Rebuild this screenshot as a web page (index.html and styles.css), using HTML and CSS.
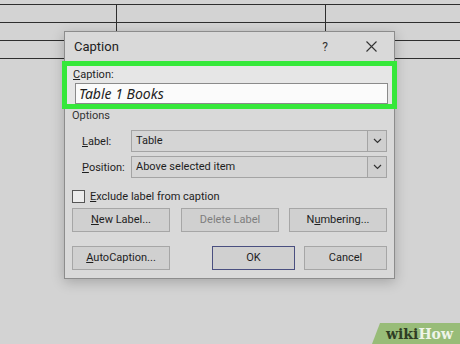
FILE: index.html
```html
<!DOCTYPE html>
<html lang="en">
<head>
    <meta charset="UTF-8">
    <title>Caption</title>
    <link rel="stylesheet" href="styles.css">
</head>
<body>

<table class="doc-table">
    <tr><td class="c1"></td><td class="c2"></td><td class="c3"></td></tr>
    <tr><td class="c1"></td><td class="c2"></td><td class="c3"></td></tr>
    <tr><td class="c1"></td><td class="c2"></td><td class="c3"></td></tr>
    <tr><td class="c1"></td><td class="c2"></td><td class="c3"></td></tr>
</table>

<div class="dialog">
    <div class="title-bar">
        <span class="title">Caption</span>
        <span class="help">?</span>
        <svg class="close" width="11" height="11" viewBox="0 0 11 11">
            <path d="M0.5 0.5 L10.5 10.5 M10.5 0.5 L0.5 10.5" stroke="#333" stroke-width="1.1" fill="none"/>
        </svg>
    </div>

    <div class="highlight">
        <div class="field-label"><u>C</u>aption:</div>
        <div class="caption-input">Table 1 Books</div>
    </div>

    <div class="body">
        <div class="group-label">Options</div>
        <div class="row first">
            <span class="row-label"><u>L</u>abel:</span>
            <div class="select">
                <span class="select-text">Table</span>
                <span class="arrow"><svg width="9" height="6" viewBox="0 0 9 6"><path d="M1 1 L4.5 4.5 L8 1" stroke="#333" stroke-width="1.2" fill="none"/></svg></span>
            </div>
        </div>
        <div class="row">
            <span class="row-label"><u>P</u>osition:</span>
            <div class="select">
                <span class="select-text">Above selected item</span>
                <span class="arrow"><svg width="9" height="6" viewBox="0 0 9 6"><path d="M1 1 L4.5 4.5 L8 1" stroke="#333" stroke-width="1.2" fill="none"/></svg></span>
            </div>
        </div>

        <div class="check-row">
            <span class="checkbox"></span>
            <span><u>E</u>xclude label from caption</span>
        </div>

        <div class="button-row">
            <div class="button"><u>N</u>ew Label...</div>
            <div class="button disabled">Delete Label</div>
            <div class="button">N<u>u</u>mbering...</div>
        </div>

        <div class="button-row bottom">
            <div class="button"><u>A</u>utoCaption...</div>
            <div class="button small default">OK</div>
            <div class="button small">Cancel</div>
        </div>
    </div>
</div>

<div class="logo"><span class="wiki">wiki</span><span class="how">How</span></div>

</body>
</html>
```

FILE: styles.css
```css
body {
    margin: 0;
    width: 460px;
    height: 344px;
    overflow: hidden;
    background-color: #d3d3d3;
    font-family: Roboto, "Noto Sans", sans-serif;
    color: #1e1e1e;
    position: relative;
}
.doc-table {
    border-collapse: collapse;
    table-layout: fixed;
    width: 470px;
    margin-top: 4px;
    margin-left: -1px;
}
.doc-table td {
    height: 17px;
    padding: 0;
    border-top: 1.5px solid #2e2e2e;
    border-left: 1.5px solid #2e2e2e;
}
.doc-table .c1 { width: 117px; border-left: none; }
.doc-table .c2 { width: 208px; }
.doc-table .c3 { width: 145px; }

.dialog {
    position: absolute;
    left: 64px;
    top: 31px;
    width: 329px;
    background-color: #d9d9d9;
    border: 1px solid #8c8c8c;
    box-shadow: 0 3px 12px rgba(0, 0, 0, 0.22);
    padding-bottom: 8px;
}
.title-bar {
    height: 29px;
    display: flex;
    align-items: center;
    padding-left: 9px;
    padding-right: 17px;
}
.title {
    font-size: 13px;
    flex: 1;
    color: #222;
}
.help {
    font-size: 12px;
    margin-right: 38px;
    color: #333;
}
.highlight {
    margin: 0 -3px;
    border: 5px solid #36e83a;
    background-color: #e6e6e6;
    padding: 1px 4px 0 6px;
}
.field-label {
    font-size: 11px;
    line-height: 16px;
}
.caption-input {
    margin-left: 2px;
    height: 19px;
    background-color: #fbfbfb;
    border: 1px solid #8a8a8a;
    font-family: "Noto Sans", sans-serif;
    font-size: 14px;
    font-style: italic;
    line-height: 19px;
    padding-left: 3px;
}
.body {
    padding: 0 7px;
}
.group-label {
    font-size: 11px;
    line-height: 14px;
    color: #333;
}
.row {
    display: flex;
    align-items: center;
    margin-top: 4px;
    padding-left: 10px;
}
.row.first {
    margin-top: 7px;
}
.row-label {
    font-size: 11px;
    width: 49px;
}
.select {
    flex: 1;
    height: 20px;
    display: flex;
    border: 1px solid #a4a4a4;
    background-color: #d5d5d5;
}
.select-text {
    flex: 1;
    font-size: 11px;
    line-height: 20px;
    padding-left: 4px;
}
.arrow {
    width: 18px;
    border-left: 1px solid #a4a4a4;
    display: flex;
    align-items: center;
    justify-content: center;
    background-color: #cfcfcf;
}
.check-row {
    display: flex;
    align-items: center;
    gap: 5px;
    font-size: 11px;
    margin-top: 12px;
    height: 13px;
}
.checkbox {
    width: 11px;
    height: 11px;
    border: 1px solid #555;
    background-color: #ececec;
}
.button-row {
    display: flex;
    gap: 11px;
    margin-top: 5px;
}
.button-row.bottom {
    margin-top: 14px;
    gap: 10px;
}
.button {
    width: 96px;
    height: 22px;
    border: 1px solid #a6a6a6;
    background-color: #d0d0d0;
    font-size: 11px;
    line-height: 22px;
    text-align: center;
}
.button-row .button:nth-child(3) {
    margin-left: -1px;
}
.button.small {
    width: 81px;
}
.button.default {
    margin-left: auto;
    border: 1px solid #4a4f80;
}
.button.disabled {
    color: #7e7e7e;
}
.logo {
    position: absolute;
    left: 372px;
    top: 323px;
    width: 88px;
    height: 21px;
    background-color: #98bc78;
    clip-path: polygon(8px 0, 100% 0, 100% 100%, 0 100%);
    font-family: "DejaVu Serif", serif;
    font-weight: bold;
    font-size: 14px;
    line-height: 22px;
    padding-left: 14px;
    box-sizing: border-box;
}
.wiki { color: #2f3d24; }
.how { color: #eef4e8; }
```
